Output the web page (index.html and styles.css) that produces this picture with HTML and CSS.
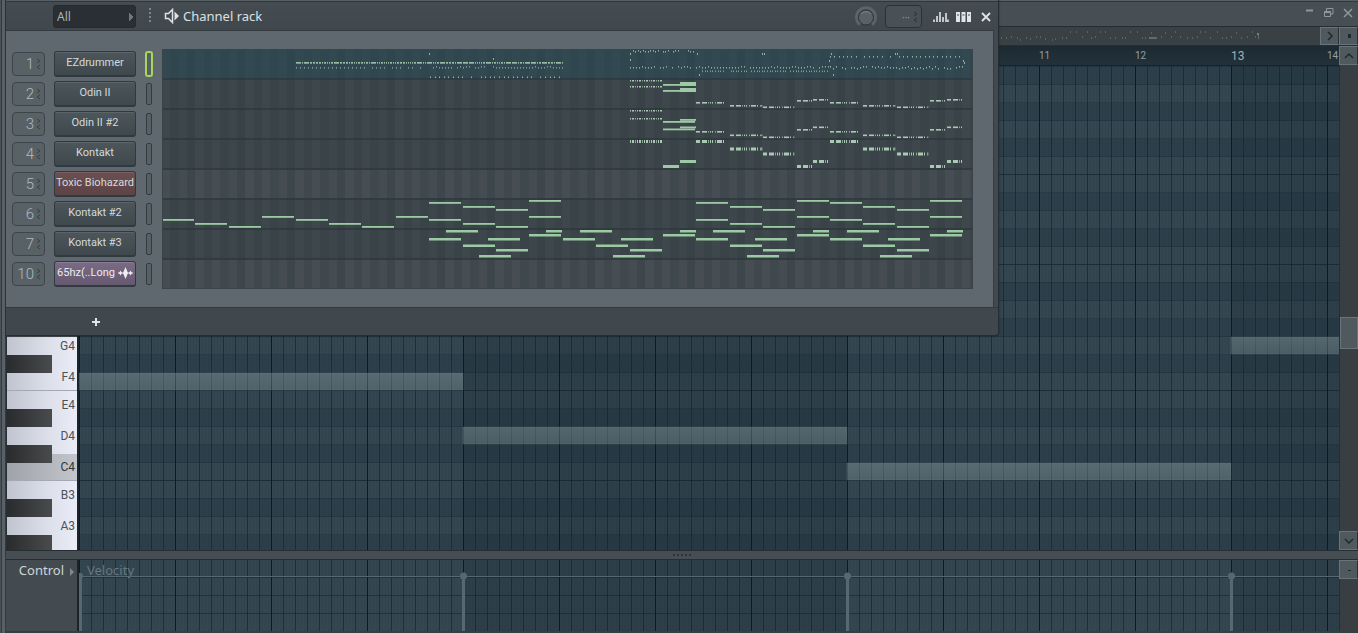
FILE: index.html
```html
<!DOCTYPE html>
<html lang="en">
<head>
<meta charset="utf-8">
<title>Channel rack</title>
<link rel="stylesheet" href="styles.css">
</head>
<body>
<div class="desktop">
  <div class="edge"></div>
  <main class="roll">
    <header class="roll-title">
      <button class="win-btn" aria-label="Minimize"><svg width="10" height="12"><path d="M1 3.500h7" stroke="#8e989d" stroke-width="2"/></svg></button>
      <button class="win-btn" aria-label="Restore"><svg width="10" height="12"><path d="M.5 4.500h6v5h-6zM.5 5.500h6M2.500 4V1.500h6.500v5.500h-2" fill="none" stroke="#8e989d"/></svg></button>
      <button class="win-btn" aria-label="Close roll"><svg width="10" height="12"><path d="M1 2l8 8M9 2l-8 8" stroke="#8e989d" stroke-width="1.500"/></svg></button>
    </header>
    <div class="overview">
      <svg class="overview-map" id="overview" aria-hidden="true"></svg>
      <button class="sq" aria-label="Scroll right"><svg width="8" height="10"><path d="M2 1l4 4-4 4" fill="none" stroke="#20282d" stroke-width="1.500"/></svg></button>
      <button class="sq" aria-label="Zoom"><svg width="8" height="10"><rect x="3" y="3" width="3" height="4" fill="#20282d"/></svg></button>
    </div>
    <div class="stage">
      <div class="stage-main">
        <div class="ruler"><span>11</span><span>12</span><span class="strong">13</span><span>14</span></div>
        <div class="keys-and-grid">
          <div class="keyboard">
            <div class="key sharp">G4</div>
            <div class="key line">F4</div>
            <div class="key sharp">E4</div>
            <div class="key tall sharp">D4</div>
            <div class="key line middle">C4</div>
            <div class="key sharp">B3</div>
            <div class="key tall sharp">A3</div>
            <div class="key cut"></div>
          </div>
          <div class="grid pitches">
            <svg class="fill" aria-hidden="true">
              <defs><linearGradient id="ghost" x2="0" y2="1"><stop offset="0" stop-color="#91a3a8" stop-opacity=".4"/><stop offset="1" stop-color="#91a3a8" stop-opacity=".3"/></linearGradient></defs>
              <g class="ghost"><rect x="0" y="307" width="384" height="17"/><rect x="384" y="361" width="384" height="17"/><rect x="768" y="397" width="384" height="17"/><rect x="1152" y="271" width="384" height="17"/></g>
            </svg>
          </div>
        </div>
      </div>
      <div class="vbar">
        <button class="sq" aria-label="Scroll up"><svg width="10" height="8"><path d="M1 6l4-4 4 4" fill="none" stroke="#20282d" stroke-width="1.500"/></svg></button>
        <div class="track"><div class="thumb"></div></div>
        <button class="sq" aria-label="Scroll down"><svg width="10" height="8"><path d="M1 2l4 4 4-4" fill="none" stroke="#20282d" stroke-width="1.500"/></svg></button>
      </div>
    </div>
    <div class="splitter"><i></i><i></i><i></i><i></i><i></i></div>
    <section class="control">
      <button class="control-label">Control<svg width="5" height="8"><path d="M0 0l4 4-4 4z" fill="#80898e"/></svg></button>
      <div class="grid events">
        <span class="velocity">Velocity</span>
        <svg class="fill" aria-hidden="true">
          <path d="M0 16.500h3000" stroke="#566972"/>
          <g class="stems"><rect x="0" y="16" width="3" height="60"/><rect x="383" y="16" width="3" height="60"/><rect x="767" y="16" width="3" height="60"/><rect x="1151" y="16" width="3" height="60"/>
          <circle cx="1" cy="16" r="3"/><circle cx="384.500" cy="16" r="3.500"/><circle cx="768.500" cy="16" r="3.500"/><circle cx="1152.500" cy="16" r="3.500"/></g>
        </svg>
      </div>
      <div class="vbar"><button class="sq" aria-label="Collapse"><svg width="8" height="8"><path d="M3 4.500h3" stroke="#20282d"/></svg></button><div class="track"></div></div>
    </section>
  </main>

  <section class="rack">
    <header class="rack-title">
      <select class="filter" aria-label="Channel filter"><option>All</option></select>
      <svg class="grip" width="2" height="16"><path d="M1 1v15" stroke="#7b858a" stroke-width="2" stroke-dasharray="2 2"/></svg>
      <svg class="speaker" width="16" height="16"><path d="M1.500 5.500h3l4-4v13l-4-4h-3z" fill="none" stroke="#dde2e4" stroke-width="1.500"/><path d="M10.500 3.500l4.500 4.500-4.500 4.500z" fill="#dde2e4"/></svg>
      <h1>Channel rack</h1>
      <svg class="knob" width="22" height="24"><path d="M5 19.500A9.500 9.500 0 1 1 17 19.500" fill="none" stroke="#5b646a" stroke-width="3"/><circle cx="11" cy="12.500" r="7.500" fill="#596268" stroke="#2c3439"/><path d="M6 9a6.500 6.500 0 0 1 10 0" fill="none" stroke="#7b858b"/></svg>
      <div class="swing"><span>···</span><svg width="5" height="12"><path d="M1 1l3 2-3 2M4 7l-3 2 3 2" fill="none" stroke="#2c3439"/></svg></div>
      <button class="tool" aria-label="Graph editor"><svg width="16" height="12"><path d="M1 8.500v2.500M4 5v6M7 1v10M10 6v5M13 2v9M15 8.500v2.500" stroke="#dfe4e6" stroke-width="1.600"/></svg></button>
      <button class="tool" aria-label="Step editor"><svg width="15" height="10"><path d="M0 0h4v10H0zM5.500 0h4v10h-4zM11 0h4v10h-4z" fill="#dfe4e6"/><path d="M1 3h2M6.500 3h2M12 3h2" stroke="#424a4f" stroke-width="1"/></svg></button>
      <button class="tool" aria-label="Close rack"><svg width="10" height="10"><path d="M1 1l8 8M9 1l-8 8" stroke="#dfe4e6" stroke-width="1.800"/></svg></button>
    </header>
    <div class="rack-body">
      <div class="channels" id="channels"></div>
      <svg class="patterns" id="patterns" viewBox="0 0 811 240" preserveAspectRatio="none" aria-hidden="true"></svg>
    </div>
    <footer class="rack-foot"><button class="add" aria-label="Add channel"><svg width="8" height="8"><path d="M4 0v8M0 4h8" stroke="#dfe4e6" stroke-width="2"/></svg></button></footer>
  </section>
</div>
<script src="script.js"></script>
</body>
</html>
```
FILE: styles.css
```css
* { box-sizing: border-box; }
body { margin: 0; background: #434b50; font-family: "Noto Sans", "Open Sans", sans-serif; font-size: 13px; color: #d3d9dc; }
button { margin: 0; padding: 0; border: 0; background: none; font: inherit; color: inherit; display: flex; align-items: center; justify-content: center; }
svg { display: block; flex: none; }
.desktop { position: relative; display: grid; grid-template-columns: 6px minmax(0, 1fr); min-height: 100vh; overflow: hidden; }
.edge { background: linear-gradient(90deg, #4b5257 1px, #333b40 1px 2px, #596167 2px 5px, #333b40 5px); }
.roll { display: flex; flex-direction: column; min-width: 0; border-bottom: 2px solid #363e42; }

.roll-title { height: 26px; display: flex; justify-content: flex-end; align-items: center; gap: 9px; padding-right: 5px; background: linear-gradient(#586065 1px, #30383d 1px 2px, #474f54 2px); }
.win-btn { width: 10px; }
.overview { height: 20px; display: flex; border-top: 1px solid #262e33; border-bottom: 1px solid #262e33; background: #394144; }
.overview-map { flex: 1; min-width: 0; height: 18px; }
.sq { width: 19px; height: 19px; flex: none; background: #50595e; border: 1px solid #69747a; border-right-color: #293136; }
.overview .sq { height: 18px; }

.stage { flex: 1; display: flex; min-height: 504px; }
.stage-main { flex: 1; min-width: 0; display: flex; flex-direction: column; }
.ruler { height: 20px; display: flex; align-items: center; padding-left: 1033px; background: linear-gradient(#1d2a32, #22313a); border-bottom: 1px solid #16232b; overflow: hidden; color: #91a0a6; font-family: "Roboto", sans-serif; font-size: 10px; line-height: 18px; }
.ruler span { flex: 0 0 96px; }
.ruler span:last-child { flex: 1 1 0; }
.ruler .strong { font-size: 12px; color: #a4b0b5; }
.keys-and-grid { flex: 1; display: flex; }
.keyboard { width: 73px; padding-top: 271px; overflow: hidden; border-left: 1px solid #263036; border-right: 2px solid #1a252b; background: #434b50; }
.key { position: relative; height: 27px; display: flex; align-items: center; justify-content: flex-end; padding-right: 2px; background: linear-gradient(90deg, #c0c4ce, #dde0ea 60%, #e9ecf6); color: #4c525a; font-family: "Roboto", sans-serif; font-size: 12px; line-height: 14px; }
.key:first-child { padding-bottom: 9px; }
.key.tall { height: 36px; }
.key.cut { height: 6px; }
.key.line { border-bottom: 1px solid #a5a8b2; }
.key.middle { background: linear-gradient(90deg, #9fa2aa, #c3c5cc); color: #30363c; }
.key.sharp::after { content: ""; position: absolute; z-index: 1; left: 0; bottom: -9px; width: 45px; height: 18px; background: linear-gradient(90deg, #292b2c, #4a4b4c); }

.grid { position: relative; flex: 1; min-width: 0; overflow: hidden; background-color: #34464f; }
.pitches, .events {
  --cols: repeating-linear-gradient(90deg, #0b1b23 0 1px, transparent 1px 96px),
    repeating-linear-gradient(90deg, rgba(20, 36, 46, .7) 0 1px, transparent 1px 12px),
    repeating-linear-gradient(90deg, rgba(20, 35, 45, .08) 0 1px, transparent 1px 3px),
    repeating-linear-gradient(90deg, transparent 0 384px, rgba(13, 30, 40, .18) 384px 768px);
}
.pitches {
  background-image: var(--cols),
    repeating-linear-gradient(rgba(20, 35, 45, .3) 0 1px, transparent 1px 18px),
    repeating-linear-gradient(#2d3f4a 0 19px, #34464f 19px 37px, #2d3f4a 37px 55px, #34464f 55px 73px, #2d3f4a 73px 91px, #34464f 91px 108px, #22323c 108px 109px, #34464f 109px 127px, #2d3f4a 127px 145px, #34464f 145px 163px, #2d3f4a 163px 181px, #34464f 181px 198px, #22323c 198px 199px, #34464f 199px 216px);
}
.events { background-image: var(--cols), repeating-linear-gradient(transparent 0 17px, #22333d 17px 18px); }
.fill { position: absolute; inset: 0; width: 100%; height: 100%; }
.ghost { fill: url(#ghost); stroke: #6b7d84; stroke-opacity: .3; }
.vbar { width: 19px; display: flex; flex-direction: column; }
.track { flex: 1; padding-top: 252px; background: #383e42; border-left: 1px solid #252d31; }
.control .track { padding: 0; }
.thumb { height: 32px; background: #50595e; border: 1px solid #69747a; }
.splitter { height: 10px; display: flex; justify-content: center; align-items: center; gap: 2px; background: #464e53; border-top: 1px solid #252e33; border-bottom: 1px solid #252e33; }
.splitter i { width: 2px; height: 2px; background: #2b3338; }
.control { height: 71px; display: flex; }
.control-label { width: 73px; height: 71px; align-items: flex-start; justify-content: flex-end; padding-top: 1px; padding-right: 2px; gap: 6px; border-right: 2px solid #1a252b; font-size: 13px; line-height: 19px; color: #d0d6d8; }
.control-label svg { margin-top: 7px; }
.velocity { display: block; padding-left: 8px; font-size: 13px; line-height: 20px; color: #687780; }
.stems { fill: #566972; }

.rack { position: absolute; left: 6px; top: 0; width: calc(100% - 365px); padding-right: 4px; background: #424a4f; border-right: 1px solid #262e33; border-bottom: 1px solid #262e33; border-radius: 0 0 4px; box-shadow: 0 0 2px rgba(0, 0, 0, .4); }
.rack-title { height: 30px; margin-right: -4px; display: flex; align-items: center; padding-left: 47px; padding-right: 7px; background: linear-gradient(#586065 1px, #30383d 1px 2px, #444c51 2px, #40484d); }
.filter { appearance: none; width: 83px; height: 23px; margin: 2px 0 0; padding: 0 3px; border: 1px solid #242b30; border-radius: 3px; font: 12px "Noto Sans", sans-serif; color: #a9b3b7; background: conic-gradient(from 225deg at 100% 50%, #6e787e 90deg, #292f33 0) 75px 7px / 4px 8px no-repeat #292f33; }
.grip { margin-left: 13px; }
.speaker { margin-left: 13px; margin-top: 2px; }
.rack-title h1 { flex: 1; margin: 1px 0 0 3px; font-size: 13px; line-height: 20px; font-weight: 400; color: #dbe0e2; white-space: nowrap; }
.knob { margin-top: 3px; }
.swing { width: 37px; height: 23px; margin: 3px 11px 0 8px; display: flex; align-items: center; justify-content: flex-end; gap: 3px; padding-right: 3px; border: 1px solid #2a3237; border-radius: 4px; background: #495157; color: #89949a; font-size: 10px; }
.tool { margin: 3px 7px 0 0; }
.tool:last-child { margin: 3px 0 0 3px; }
.rack-body { display: flex; gap: 10px; padding: 18px 20px 18px 6px; background: #5f686e; border-top: 1px solid #333b40; border-right: 1px solid #353d42; }
.channel { height: 30px; display: flex; align-items: center; }
.num { width: 33px; height: 24px; display: flex; align-items: center; justify-content: flex-end; gap: 2px; padding-right: 3px; border: 1px solid #3c454a; border-radius: 4px; background: #586166; color: #b0babe; font-family: "Roboto", sans-serif; font-weight: 300; font-size: 15px; line-height: 20px; }
.name { width: 82px; height: 26px; margin: 0 10px 0 9px; padding-bottom: 2px; border: 1px solid #30393e; border-bottom-width: 2px; border-radius: 3px; background: linear-gradient(#4d565b, #3e484d); box-shadow: inset 0 1px #5b656a; color: #d4dadc; font-family: "Roboto", sans-serif; font-size: 11px; line-height: 16px; white-space: nowrap; gap: 3px; }
.name.red { background: linear-gradient(#6b5052, #5c4345); box-shadow: inset 0 1px #7b5f61; }
.name.purple { background: linear-gradient(#7a6c86, #65586f); box-shadow: inset 0 1px #8b7d96; color: #eceaf0; }
.led { width: 6px; height: 22px; border: 1px solid #333b40; border-radius: 2px; background: #566065; }
.led.on { outline: 2px solid #a6d65a; outline-offset: -1px; height: 24px; }
.patterns { flex: 1; min-width: 0; height: 240px; outline: 1px solid #3a4348; outline-offset: -1px; background: repeating-linear-gradient(90deg, transparent 0 8px, rgba(45, 55, 61, .25) 8px 17px, rgba(50, 60, 66, .08) 17px 25px, rgba(45, 55, 61, .34) 25px 33px, transparent 33px 42px, rgba(45, 55, 61, .24) 42px 50px), #464e53; }
.rack-foot { height: 28px; padding-left: 86px; margin-right: -4px; display: flex; align-items: center; border-top: 1px solid #333b40; background: #40484d; border-radius: 0 0 4px; }
```
FILE: script.js
```js
const NS = "http://www.w3.org/2000/svg";
const channels = [
  [1, "EZdrummer"], [2, "Odin II"], [3, "Odin II #2"], [4, "Kontakt"],
  [5, "Toxic Biohazard", "red"], [6, "Kontakt #2"], [7, "Kontakt #3"], [10, "65hz(..Long", "purple"]
];
const arrows = '<svg width="5" height="12"><path d="M1 1l3 2-3 2M4 7l-3 2 3 2" fill="none" stroke="#394247"/></svg>';
const wave = '<svg width="15" height="12"><path d="M0 6h15" stroke="#f0eef3"/><path d="M2.500 3.500l1.500 2.500-1.500 2.500L1 6zM7.500 0l2.500 6-2.500 6L5 6zM12.500 3.500L14 6l-1.500 2.500L11 6z" fill="#f0eef3"/></svg>';
document.getElementById("channels").innerHTML = channels.map(([n, name, tint], i) =>
  `<div class="channel"><span class="num">${n}${arrows}</span>` +
  `<button class="name ${tint || ""}">${name}${tint === "purple" ? wave : ""}</button>` +
  `<span class="led${i ? "" : " on"}"></span></div>`).join("");

function rect(svg, x, y, w, h, fill, opacity) {
  const r = document.createElementNS(NS, "rect");
  const attrs = { x, y, width: w, height: h, fill, opacity: opacity || 1 };
  for (const k in attrs) r.setAttribute(k, attrs[k]);
  svg.appendChild(r);
}
const map = document.getElementById("patterns");
const STEP = 33.4;
const GREEN = "#9ccaa4";
const PALE = "#a9c9b4";
let seed = 7;
const rnd = () => (seed = (seed * 16807) % 2147483647) / 2147483647;

/* Lanes: the selected one is blue, the ones that hold notes are darker. */
rect(map, 0, 0, 811, 30, "#204352", 0.5);
[1, 2, 3, 5, 6].forEach(i => rect(map, 0, i * 30, 811, 30, "#333c40", 0.38));
for (let i = 1; i < 8; i++) rect(map, 0, i * 30 - 1, 811, 2, "#2e373c", 0.75);

const note = (i, y, len = 1, h = 1.8) => rect(map, Math.round(i * STEP), y, Math.round(len * STEP) - 1, h, GREEN);
const dashes = (i, len, y, h, runs) => {
  let x = Math.round(i * STEP);
  const end = x + len * STEP - 1;
  for (let k = 0; x < end; k++) {
    const [on, off] = runs[k % runs.length];
    rect(map, x, y, Math.min(on, end - x), h, PALE, k % 3 === 2 ? 0.7 : 1);
    x += on + off;
  }
};
const riff = [[4, 2], [5, 1], [1, 1], [1, 1], [1, 2], [1, 1], [5, 1], [1, 2]];
const even = [[1, 1], [2, 1], [1, 1]];

const low = [170, 174, 177, 167];
const high = [153, 157, 160, 151];
for (let i = 0; i < 12; i++) note(i, low[i % 4]);
for (let i = 16; i < 24; i++) note(i, low[i % 4]);
[8, 9, 10, 11, 16, 17, 18, 19, 20, 21, 22, 23].forEach(i => note(i, high[i % 4]));
[8, 12, 16, 20].forEach(b => {
  [[0, 189], [0.5, 181], [1, 195.5], [1.5, 206], [1.75, 189], [2, 200], [3, 185]].forEach(([d, y]) => note(b + d, y, 1, 2.5));
  note(b + 3.5, 181, 0.5, 2.5);
});

[31, 37, 61, 69].forEach(y => dashes(14, 1, y, 1.5, even));
dashes(14, 1, 91, 3, even);
note(15, 35); note(15.5, 33, 0.5, 4); note(15, 41); note(15.5, 39, 0.5, 4);
note(15, 72); note(15.5, 70, 0.5); note(15, 79.5); note(15.5, 77.5, 0.5);
note(15, 116, 0.5, 3); note(15.5, 111, 0.5, 3);
[16, 20].forEach(b => [[53, 56, 57.5, 51, 50, 1.6], [82, 85.5, 87.5, 80, 77.5, 1.6], [91, 98.5, 103.5, 116, 111, 3]].forEach(([a, c, d, e, f, h]) => {
  dashes(b, 0.9, a, h, riff); dashes(b + 1, 1, c, h, riff); dashes(b + 2, 0.97, d, h, riff);
  dashes(b + 3, 0.5, e, h, riff); dashes(b + 3.5, 0.5, f, h, riff);
}));

/* Drum hits: a row of ticks between two x positions. */
const hits = (x0, x1, y, gap, jitter = 0, o = 0.75) => {
  for (let x = x0; x < x1; x += gap) {
    if (rnd() < 0.12) continue;
    rect(map, Math.round(x), y + Math.round(rnd() * jitter), 1, 1.6, "#b7cfc8", o);
  }
};
for (let x = 134; x < 401;) {
  const w = rnd() < 0.25 ? 5 : 1 + Math.floor(rnd() * 2);
  rect(map, x, 13, Math.min(w, 401 - x), 1.7, "#a4c8ad", 0.9);
  x += w + 1;
}
hits(134, 268, 18, 4, 0, 0.6);
hits(268, 401, 17, 3, 1.5, 0.6);
hits(268, 398, 27.5, 4.6);
hits(468, 533, 1, 2.5, 1);
hits(468, 668, 17, 3, 1.5, 0.7);
hits(540, 665, 21.5, 2.6, 0, 0.6);
hits(668, 798, 7, 4.3);
hits(668, 802, 17, 3, 2);
[[267, 4], [331, 9], [468, 4], [468, 10], [535, 4], [537, 25], [600, 4], [602, 4], [667, 11], [669, 4], [671, 25], [733, 4], [735, 4], [801, 11], [802, 13]].forEach(([x, y]) => rect(map, x, y, 1, 2, "#b7cfc8", 0.75));

const over = document.getElementById("overview");
for (let x = 994; x < 1250; x += 5) {
  const y = x < 1060 ? 9 + Math.floor(rnd() * 4) : (rnd() < 0.5 ? 4 + Math.floor(rnd() * 2) : 9 + Math.floor(rnd() * 2));
  rect(over, x + Math.floor(rnd() * 3), y, 1, 2, "#8b9997", 0.4);
}
rect(over, 1143, 10, 7, 2, "#8b9997", 0.5);
rect(over, 1251, 6, 2, 2, "#8b9997", 0.7);
rect(over, 1252, 8, 1, 4, "#8b9997", 0.5);
```
